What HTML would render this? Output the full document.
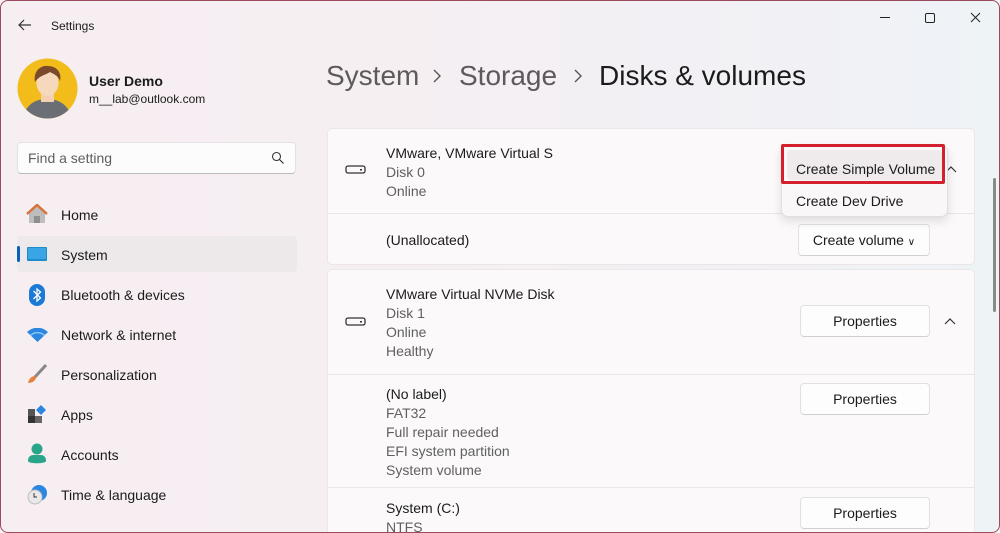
<!DOCTYPE html>
<html style="overflow:hidden;height:533px"><head><meta charset="utf-8"><style>
*{box-sizing:border-box;margin:0;padding:0}
html,body{overflow:hidden}
body{width:1000px;height:533px;overflow:hidden;font-family:"Liberation Sans",sans-serif;color:#1b1b1b;position:relative;
background:linear-gradient(90deg,#f6eef1 0%,#f5eff2 40%,#f1f1f5 80%,#eef3f6 100%);}
.a{position:absolute;white-space:nowrap}
.t{font-size:14px}
.g{color:#606060;font-size:14px}
.card{position:absolute;left:327px;width:648px;background:#fbf9fa;border:1px solid #ebe6e8;border-radius:5px}
.hr{position:absolute;left:327px;width:648px;height:1px;background:#ebe6e8}
.btn{position:absolute;background:#fefdfd;border:1px solid #e3dfe1;border-bottom-color:#d3cfd1;border-radius:4px;font-size:14px;text-align:center;line-height:30px;height:32px}
.nav{position:absolute;left:61px;font-size:14px}
</style></head><body>
<div class="a" style="left:0;top:0;width:1000px;height:533px;border:1px solid #9c4a5e;border-radius:8px;pointer-events:none;z-index:5"></div>
<svg class="a" style="left:17px;top:18px" width="16" height="14"><path d="M14 7H2M7 2L2 7l5 5" stroke="#333" stroke-width="1.2" fill="none"/></svg>
<div class="a" style="left:51px;top:19px;font-size:12px">Settings</div>
<svg class="a" style="left:875px;top:10px" width="110" height="16"><path d="M5 7.5h10" stroke="#222"/><rect x="50.5" y="3.5" width="9" height="9" rx="1.5" stroke="#222" fill="none"/><path d="M96 3l9 9M105 3l-9 9" stroke="#222"/></svg>
<svg class="a" style="left:17px;top:58px" width="61" height="61" viewBox="0 0 61 61"><defs><clipPath id="c"><circle cx="30.5" cy="30.5" r="30"/></clipPath></defs><circle cx="30.5" cy="30.5" r="30" fill="#f2bc1b"/><g clip-path="url(#c)"><path d="M6 61c2-14 12-20 24-20s22 6 25 20z" fill="#6b6f75"/><rect x="24" y="34" width="13" height="10" fill="#f2d0b0"/><ellipse cx="30.5" cy="25" rx="11" ry="13" fill="#f6d9bd"/><path d="M18 24c-2-10 5-17 13-16 9 0 14 7 12 15-2-6-7-7-10-9-4 3-10 3-15 10z" fill="#7a4a2a"/></g></svg>
<div class="a" style="left:89px;top:73px;font-size:14px;font-weight:bold">User Demo</div>
<div class="a" style="left:89px;top:92px;font-size:12px">m__lab@outlook.com</div>
<div class="a" style="left:17px;top:142px;width:279px;height:32px;background:#fdfcfc;border:1px solid #e5e0e2;border-bottom-color:#bbb;border-radius:4px"></div>
<div class="a" style="left:28px;top:150px;font-size:14px;color:#5f5f5f">Find a setting</div>
<svg class="a" style="left:271px;top:151px" width="14" height="14"><circle cx="5.5" cy="5.5" r="4" stroke="#333" fill="none" stroke-width="1.1"/><path d="M8.5 8.5l4 4" stroke="#333" stroke-width="1.2"/></svg>
<div class="a" style="left:17px;top:236px;width:280px;height:36px;background:#ede8ea;border-radius:4px"></div>
<div class="a" style="left:17px;top:246px;width:3px;height:16px;background:#0a5fb8;border-radius:2px"></div>
<svg class="a" style="left:26px;top:204px" width="22" height="20"><path d="M3 9l8-7 8 7v10H3z" fill="#bdbdbd"/><path d="M1 10l10-9 10 9" stroke="#d8713a" stroke-width="2.5" fill="none"/><rect x="8" y="12" width="6" height="7" fill="#8f8f8f"/></svg>
<div class="nav" style="top:207px">Home</div>
<svg class="a" style="left:27px;top:247px" width="20" height="14"><rect width="20" height="14" rx="1" fill="#1d8ccf"/><rect x="1" y="1" width="18" height="11" fill="#3aa5e4"/></svg>
<div class="nav" style="top:247px">System</div>
<svg class="a" style="left:29px;top:284px" width="16" height="22"><rect width="16" height="22" rx="8" fill="#1a7ad6"/><path d="M4.5 7l7 7-3.5 3V5l3.5 3-7 7" stroke="#fff" stroke-width="1.3" fill="none"/></svg>
<div class="nav" style="top:287px">Bluetooth &amp; devices</div>
<svg class="a" style="left:27px;top:328px" width="21" height="14"><path d="M0 4a15 15 0 0 1 21 0L10.5 14z" fill="#2a86e0"/><path d="M3.5 7.5a10 10 0 0 1 14 0" stroke="#8ac7f5" stroke-width="1.5" fill="none"/></svg>
<div class="nav" style="top:327px">Network &amp; internet</div>
<svg class="a" style="left:27px;top:364px" width="20" height="20"><path d="M19 1L8 13" stroke="#888" stroke-width="3"/><path d="M8 12c-4 0-6 3-7 7 4 0 7-2 8-5z" fill="#e8823a"/></svg>
<div class="nav" style="top:367px">Personalization</div>
<svg class="a" style="left:27px;top:404px" width="20" height="20"><rect x="1" y="5" width="7" height="7" fill="#555"/><rect x="1" y="12" width="7" height="7" fill="#333"/><rect x="8" y="12" width="7" height="7" fill="#666"/><path d="M14 1l5 5-5 5-5-5z" fill="#2a86e0"/></svg>
<div class="nav" style="top:407px">Apps</div>
<svg class="a" style="left:28px;top:443px" width="18" height="22"><circle cx="9" cy="6" r="5.5" fill="#2aa58a"/><path d="M0 17a5 5 0 0 1 5-5h8a5 5 0 0 1 5 5v1c0 3-18 3-18 0z" fill="#2aa58a"/></svg>
<div class="nav" style="top:447px">Accounts</div>
<svg class="a" style="left:27px;top:484px" width="21" height="21"><circle cx="12" cy="9" r="8" fill="#2a86e0"/><circle cx="8" cy="13" r="7" fill="#e9e9e9" stroke="#bbb"/><path d="M7 9v4h3" stroke="#333" fill="none"/></svg>
<div class="nav" style="top:487px">Time &amp; language</div>
<div class="a" style="left:326px;top:60px;font-size:28px;color:#5e5a5c">System</div>
<svg class="a" style="left:432px;top:69px" width="10" height="14"><path d="M2 1l6 6-6 6" stroke="#555" stroke-width="1.4" fill="none"/></svg>
<div class="a" style="left:459px;top:60px;font-size:28px;color:#5e5a5c">Storage</div>
<svg class="a" style="left:573px;top:69px" width="10" height="14"><path d="M2 1l6 6-6 6" stroke="#555" stroke-width="1.4" fill="none"/></svg>
<div class="a" style="left:599px;top:60px;font-size:28px;color:#1b1b1b">Disks &amp; volumes</div>
<div class="card" style="top:128px;height:137px"></div>
<div class="hr" style="top:213px"></div>
<svg class="a" style="left:345px;top:165px" width="22" height="10"><rect x="1" y="1" width="19" height="7" rx="2" stroke="#333" fill="none" stroke-width="1.3"/><rect x="15" y="4" width="2" height="1.5" fill="#333"/></svg>
<div class="a t" style="left:386px;top:145px">VMware, VMware Virtual S</div>
<div class="a g" style="left:386px;top:164px">Disk 0</div>
<div class="a g" style="left:386px;top:183px">Online</div>
<svg class="a" style="left:945px;top:165px" width="12" height="8"><path d="M1 7l5-5 5 5" stroke="#333" fill="none" stroke-width="1.2"/></svg>
<div class="a t" style="left:386px;top:232px">(Unallocated)</div>
<div class="btn" style="left:798px;top:224px;width:132px">Create volume <span style="font-size:10px">&#8744;</span></div>
<div class="card" style="top:269px;height:264px;border-bottom:none;border-radius:5px 5px 0 0"></div>
<div class="hr" style="top:374px"></div>
<div class="hr" style="top:487px"></div>
<svg class="a" style="left:345px;top:317px" width="22" height="10"><rect x="1" y="1" width="19" height="7" rx="2" stroke="#333" fill="none" stroke-width="1.3"/><rect x="15" y="4" width="2" height="1.5" fill="#333"/></svg>
<div class="a t" style="left:386px;top:286px">VMware Virtual NVMe Disk</div>
<div class="a g" style="left:386px;top:305px">Disk 1</div>
<div class="a g" style="left:386px;top:324px">Online</div>
<div class="a g" style="left:386px;top:343px">Healthy</div>
<div class="btn" style="left:800px;top:305px;width:130px">Properties</div>
<svg class="a" style="left:944px;top:317px" width="12" height="8"><path d="M1 7l5-5 5 5" stroke="#333" fill="none" stroke-width="1.2"/></svg>
<div class="a t" style="left:386px;top:386px">(No label)</div>
<div class="a g" style="left:386px;top:405px">FAT32</div>
<div class="a g" style="left:386px;top:424px">Full repair needed</div>
<div class="a g" style="left:386px;top:443px">EFI system partition</div>
<div class="a g" style="left:386px;top:462px">System volume</div>
<div class="btn" style="left:800px;top:383px;width:130px">Properties</div>
<div class="a t" style="left:386px;top:500px">System (C:)</div>
<div class="a g" style="left:386px;top:519px">NTFS</div>
<div class="btn" style="left:800px;top:497px;width:130px">Properties</div>
<div class="a" style="left:781px;top:145px;width:167px;height:72px;background:#f9f7f8;border:1px solid #e2dee0;border-radius:7px;box-shadow:0 4px 10px rgba(0,0,0,0.12)"></div>
<div class="a" style="left:787px;top:150px;width:155px;height:30px;background:#efebed;border-radius:4px"></div>
<div class="a" style="left:781px;top:144px;width:164px;height:40px;border:3px solid #d4202e;border-radius:2px"></div>
<div class="a t" style="left:796px;top:161px">Create Simple Volume</div>
<div class="a t" style="left:796px;top:193px">Create Dev Drive</div>
<div class="a" style="left:993px;top:178px;width:3px;height:134px;background:#8a8a8a;border-radius:2px"></div>
</body></html>
